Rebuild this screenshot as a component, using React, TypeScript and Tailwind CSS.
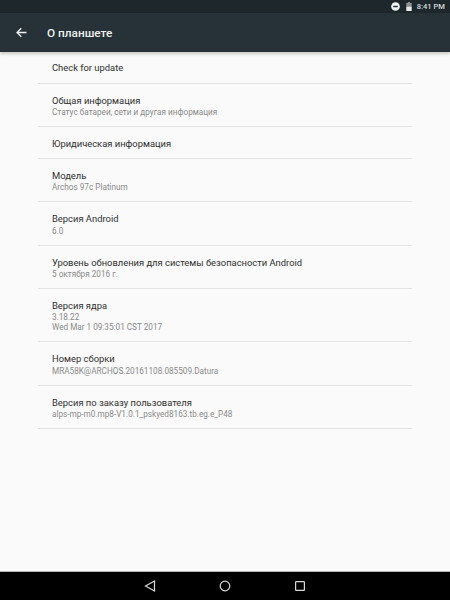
const rows = [
  { title: "Check for update", h: "h-[32px]" },
  { title: "Общая информация", sub: ["Статус батареи, сети и другая информация"], h: "h-[43px] pt-[3px]" },
  { title: "Юридическая информация", h: "h-[32px] pt-[2px]" },
  { title: "Модель", sub: ["Archos 97c Platinum"], h: "h-[43px] pt-[3px]" },
  { title: "Версия Android", sub: ["6.0"], h: "h-[44px] pt-[3px]" },
  { title: "Уровень обновления для системы безопасности Android", sub: ["5 октября 2016 г."], h: "h-[43px] pt-[3px]" },
  { title: "Версия ядра", sub: ["3.18.22", "Wed Mar 1 09:35:01 CST 2017"], h: "h-[53px] pt-[2px]", tight: true },
  { title: "Номер сборки", sub: ["MRA58K@ARCHOS.20161108.085509.Datura"], h: "h-[44px] pt-[3px]" },
  { title: "Версия по заказу пользователя", sub: ["alps-mp-m0.mp8-V1.0.1_pskyed8163.tb.eg.e_P48"], h: "h-[43px] pt-[3px]" },
];

const App = () => {
  return (
    <div className="w-[450px] h-[600px] flex flex-col bg-[#fafafa] font-['Roboto',sans-serif] overflow-hidden">
      <div className="h-[13px] bg-[#1e272b] flex items-center justify-end pr-[5px] text-[#d5d9da]">
        <svg className="mr-[6px]" width="9" height="9" viewBox="0 0 10 10">
          <circle cx="5" cy="5" r="4.8" fill="#f2f4f4" />
          <rect x="2.5" y="4.2" width="5" height="1.6" fill="#1f2a2e" />
        </svg>
        <svg className="mr-[5px]" width="6" height="9" viewBox="0 0 6 10">
          <rect x="1.8" y="0" width="2.4" height="1.2" fill="#8b9194" />
          <rect x="0" y="1" width="6" height="4" fill="#8b9194" />
          <rect x="0" y="5" width="6" height="5" fill="#e8eaea" />
        </svg>
        <span className="text-[7.6px] leading-none font-medium">8:41 PM</span>
      </div>
      <div className="h-[39px] bg-[#263238] flex items-center shadow-[0_2px_3px_rgba(0,0,0,0.2)] relative">
        <svg className="ml-[16px] mt-[-1px]" width="11" height="11" viewBox="0 0 11 11" fill="none" stroke="#eef0f0" strokeWidth="1.3">
          <path d="M10.5 5.5H1.2M5.3 1.2L1 5.5l4.3 4.3" />
        </svg>
        <span className="ml-[20px] mt-[2px] text-[11.8px] font-medium text-[#eef0f0] leading-none">О планшете</span>
      </div>
      <div className="flex-1 px-[38px]">
        {rows.map((r) => (
          <div key={r.title} className={`${r.h} flex flex-col justify-center pl-[14px] border-b border-[#e3e3e3]`}>
            <div className={r.tight ? "text-[9.4px] leading-[11.5px] mb-[1.25px] text-[#2f2f2f]" : "text-[9.4px] leading-[11.5px] text-[#2f2f2f]"}>{r.title}</div>
            {r.sub?.map((s) => (
              <div key={s} className={r.tight ? "text-[8.2px] leading-[10px] text-[#8a8a8a]" : "text-[8.2px] leading-[12px] text-[#8a8a8a]"}>{s}</div>
            ))}
          </div>
        ))}
      </div>
      <div className="h-[29px] bg-black border-t border-[#b5b5b5] flex items-center justify-center gap-[61px]">
        <svg className="ml-[-1px]" width="14" height="14" viewBox="0 0 14 14" fill="none" stroke="#d8d8d8" strokeWidth="1.2">
          <path d="M11.5 2L2.5 7l9 5z" />
        </svg>
        <svg width="14" height="14" viewBox="0 0 14 14" fill="none" stroke="#d8d8d8" strokeWidth="1.2">
          <circle cx="7" cy="7" r="4.8" />
        </svg>
        <svg width="14" height="14" viewBox="0 0 14 14" fill="none" stroke="#d8d8d8" strokeWidth="1.2">
          <rect x="2.6" y="2.6" width="8.8" height="8.8" rx="0.6" />
        </svg>
      </div>
    </div>
  );
};

export default App;
